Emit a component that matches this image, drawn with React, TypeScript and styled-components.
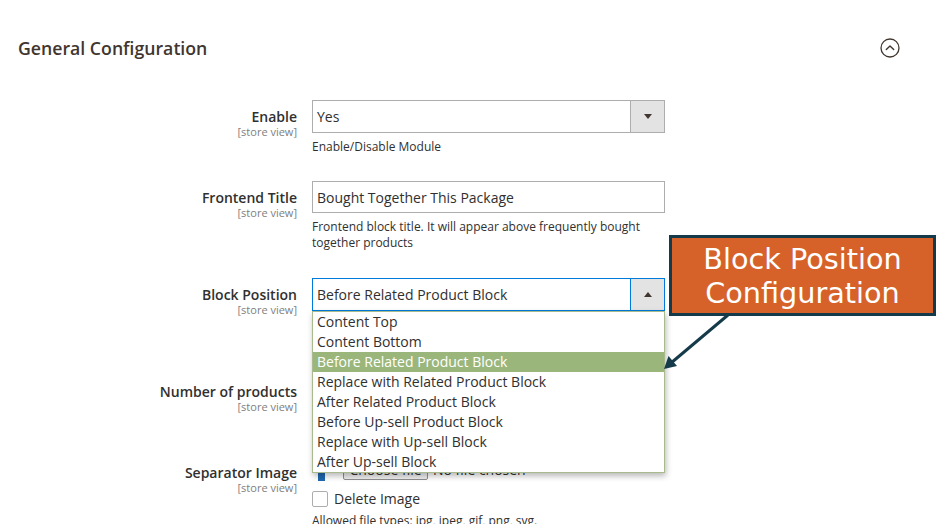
import React from "react";
import styled, { createGlobalStyle } from "styled-components";

const GlobalStyle = createGlobalStyle`
  html, body { margin: 0; padding: 0; background: #fff; }
  body { font-family: "Open Sans", "Liberation Sans", sans-serif; color: #303030; }
  * { box-sizing: border-box; }
`;

const Page = styled.div`
  position: relative;
  width: 941px;
  height: 524px;
  overflow: hidden;
  background: #fff;
`;

const Header = styled.div`
  display: flex;
  align-items: center;
  justify-content: space-between;
  height: 61px;
  padding: 35px 41px 0 18px;
`;

const Title = styled.h2`
  margin: 0;
  font-size: 17.7px;
  line-height: 26px;
  font-weight: 600;
  color: #41362f;
`;

const CollapseButton = styled.button`
  display: flex;
  align-items: center;
  justify-content: center;
  width: 20px;
  height: 20px;
  padding: 0;
  border: 0;
  background: none;
  color: #41362f;
`;

const Form = styled.div`
  display: flex;
  flex-direction: column;
  padding-top: 39px;
`;

const Row = styled.div<{ $gap: number }>`
  display: grid;
  grid-template-columns: 297px 353px;
  column-gap: 15px;
  align-items: start;
  margin-bottom: ${(p) => p.$gap}px;
`;

const LabelCol = styled.div`
  display: flex;
  flex-direction: column;
  align-items: flex-end;
  padding-top: 8px;
  text-align: right;
`;

const LabelText = styled.label`
  font-size: 14px;
  line-height: 18px;
  font-weight: 600;
  color: #303030;
`;

const Scope = styled.span`
  font-size: 11px;
  line-height: 11px;
  color: #808080;
`;

const Control = styled.div`
  position: relative;
  display: flex;
  flex-direction: column;
`;

const SelectBox = styled.div<{ $focused?: boolean }>`
  display: flex;
  height: 33px;
  border: 1px solid ${(p) => (p.$focused ? "#007bdb" : "#adadad")};
  background: #fff;
`;

const SelectValue = styled.div`
  flex: 1;
  display: flex;
  align-items: center;
  padding-left: 4px;
  font-size: 14px;
  color: #303030;
`;

const SelectArrow = styled.div<{ $focused?: boolean }>`
  display: flex;
  align-items: center;
  justify-content: center;
  width: 34px;
  background: #e3e3e3;
  border-left: 1px solid ${(p) => (p.$focused ? "#007bdb" : "#adadad")};
`;

const Triangle = styled.span<{ $up?: boolean }>`
  width: 0;
  height: 0;
  border-left: 4px solid transparent;
  border-right: 4px solid transparent;
  ${(p) =>
    p.$up ? "border-bottom: 5px solid #41362f;" : "border-top: 5px solid #41362f;"}
`;

const TextInput = styled.div`
  display: flex;
  align-items: center;
  height: 32px;
  padding-left: 4px;
  border: 1px solid #adadad;
  font-size: 14px;
  color: #303030;
`;

const Note = styled.div`
  margin-top: 6px;
  font-size: 12px;
  line-height: 16px;
  color: #303030;
`;

const OptionList = styled.ul`
  position: absolute;
  top: 33px;
  left: 0;
  z-index: 5;
  width: 353px;
  margin: 0;
  padding: 0;
  list-style: none;
  background: #fff;
  border: 1px solid #a9bb8e;
  box-shadow: 1px 3px 6px rgba(0, 0, 0, 0.28);
`;

const Option = styled.li<{ $active?: boolean }>`
  height: 20px;
  padding-left: 4px;
  font-size: 14px;
  line-height: 20px;
  color: ${(p) => (p.$active ? "#fff" : "#303030")};
  background: ${(p) => (p.$active ? "#9bb67b" : "transparent")};
`;

const FileLine = styled.div`
  display: flex;
  align-items: center;
  height: 26px;
`;

const UploadIcon = styled.svg`
  margin-left: 1px;
  color: #1f68b0;
`;

const FileButton = styled.button`
  width: 85px;
  height: 21px;
  margin-left: 13px;
  padding: 0;
  border: 1px solid #8f8f8f;
  border-radius: 2px;
  background: #efefef;
  font-family: "Open Sans", "Liberation Sans", sans-serif;
  font-size: 14px;
  line-height: 19px;
  color: #303030;
`;

const FileStatus = styled.span`
  margin-left: 5px;
  font-size: 14px;
  color: #303030;
`;

const CheckLine = styled.label`
  display: flex;
  align-items: center;
  gap: 6px;
  margin-top: 9px;
  font-size: 14px;
  line-height: 16px;
  color: #303030;
`;

const CheckBox = styled.span`
  width: 16px;
  height: 16px;
  border: 1px solid #adadad;
  border-radius: 2px;
  background: #fff;
`;

const SmallNote = styled.div`
  margin-top: 6px;
  font-size: 12px;
  line-height: 16px;
  color: #303030;
`;

const Callout = styled.div`
  position: absolute;
  left: 669px;
  top: 235px;
  z-index: 10;
  width: 267px;
  height: 81px;
  display: flex;
  align-items: center;
  justify-content: center;
  text-align: center;
  background: #d6622a;
  border: 3px solid #153b4b;
  color: #fff;
  font-family: "DejaVu Sans", sans-serif;
  font-size: 28.7px;
  line-height: 34px;
`;

const Pointer = styled.svg`
  position: absolute;
  left: 0;
  top: 0;
  z-index: 11;
  pointer-events: none;
`;

const positions = [
  "Content Top",
  "Content Bottom",
  "Before Related Product Block",
  "Replace with Related Product Block",
  "After Related Product Block",
  "Before Up-sell Product Block",
  "Replace with Up-sell Block",
  "After Up-sell Block",
];

function FieldLabel({ text }: { text: string }) {
  return (
    <LabelCol>
      <LabelText>{text}</LabelText>
      <Scope>[store view]</Scope>
    </LabelCol>
  );
}

export default function App() {
  const selected = "Before Related Product Block";
  return (
    <Page>
      <GlobalStyle />
      <Header>
        <Title>General Configuration</Title>
        <CollapseButton aria-label="Collapse">
          <svg width="20" height="20" viewBox="0 0 20 20" fill="none">
            <circle cx="10" cy="10" r="9" stroke="currentColor" strokeWidth="1.3" />
            <path d="M6.3 11.6 L10 7.9 L13.7 11.6" stroke="currentColor" strokeWidth="1.4" strokeLinecap="round" strokeLinejoin="round" />
          </svg>
        </CollapseButton>
      </Header>

      <Form>
        <Row $gap={26}>
          <FieldLabel text="Enable" />
          <Control>
            <SelectBox>
              <SelectValue>Yes</SelectValue>
              <SelectArrow>
                <Triangle />
              </SelectArrow>
            </SelectBox>
            <Note>Enable/Disable Module</Note>
          </Control>
        </Row>

        <Row $gap={27}>
          <FieldLabel text="Frontend Title" />
          <Control>
            <TextInput>Bought Together This Package</TextInput>
            <Note>Frontend block title. It will appear above frequently bought together products</Note>
          </Control>
        </Row>

        <Row $gap={60}>
          <FieldLabel text="Block Position" />
          <Control>
            <SelectBox $focused>
              <SelectValue>{selected}</SelectValue>
              <SelectArrow $focused>
                <Triangle $up />
              </SelectArrow>
            </SelectBox>
            <OptionList>
              {positions.map((p) => (
                <Option key={p} $active={p === selected}>
                  {p}
                </Option>
              ))}
            </OptionList>
          </Control>
        </Row>

        <Row $gap={44}>
          <FieldLabel text="Number of products" />
          <Control>
            <TextInput>4</TextInput>
          </Control>
        </Row>

        <Row $gap={0}>
          <FieldLabel text="Separator Image" />
          <Control>
            <FileLine>
              <UploadIcon width="17" height="24" viewBox="0 0 17 24">
                <polygon points="8.5,0 17,16 12,16 12,24 5,24 5,16 0,16" fill="currentColor" />
              </UploadIcon>
              <FileButton>Choose file</FileButton>
              <FileStatus>No file chosen</FileStatus>
            </FileLine>
            <CheckLine>
              <CheckBox />
              Delete Image
            </CheckLine>
            <SmallNote>Allowed file types: jpg, jpeg, gif, png, svg.</SmallNote>
          </Control>
        </Row>
      </Form>

      <Callout>
        Block Position
        <br />
        Configuration
      </Callout>
      <Pointer width="941" height="524" viewBox="0 0 941 524">
        <line x1="728" y1="315" x2="671" y2="363" stroke="#153b4b" strokeWidth="3" />
        <polygon points="664,369 668.5,356 677,366" fill="#153b4b" />
      </Pointer>
    </Page>
  );
}
